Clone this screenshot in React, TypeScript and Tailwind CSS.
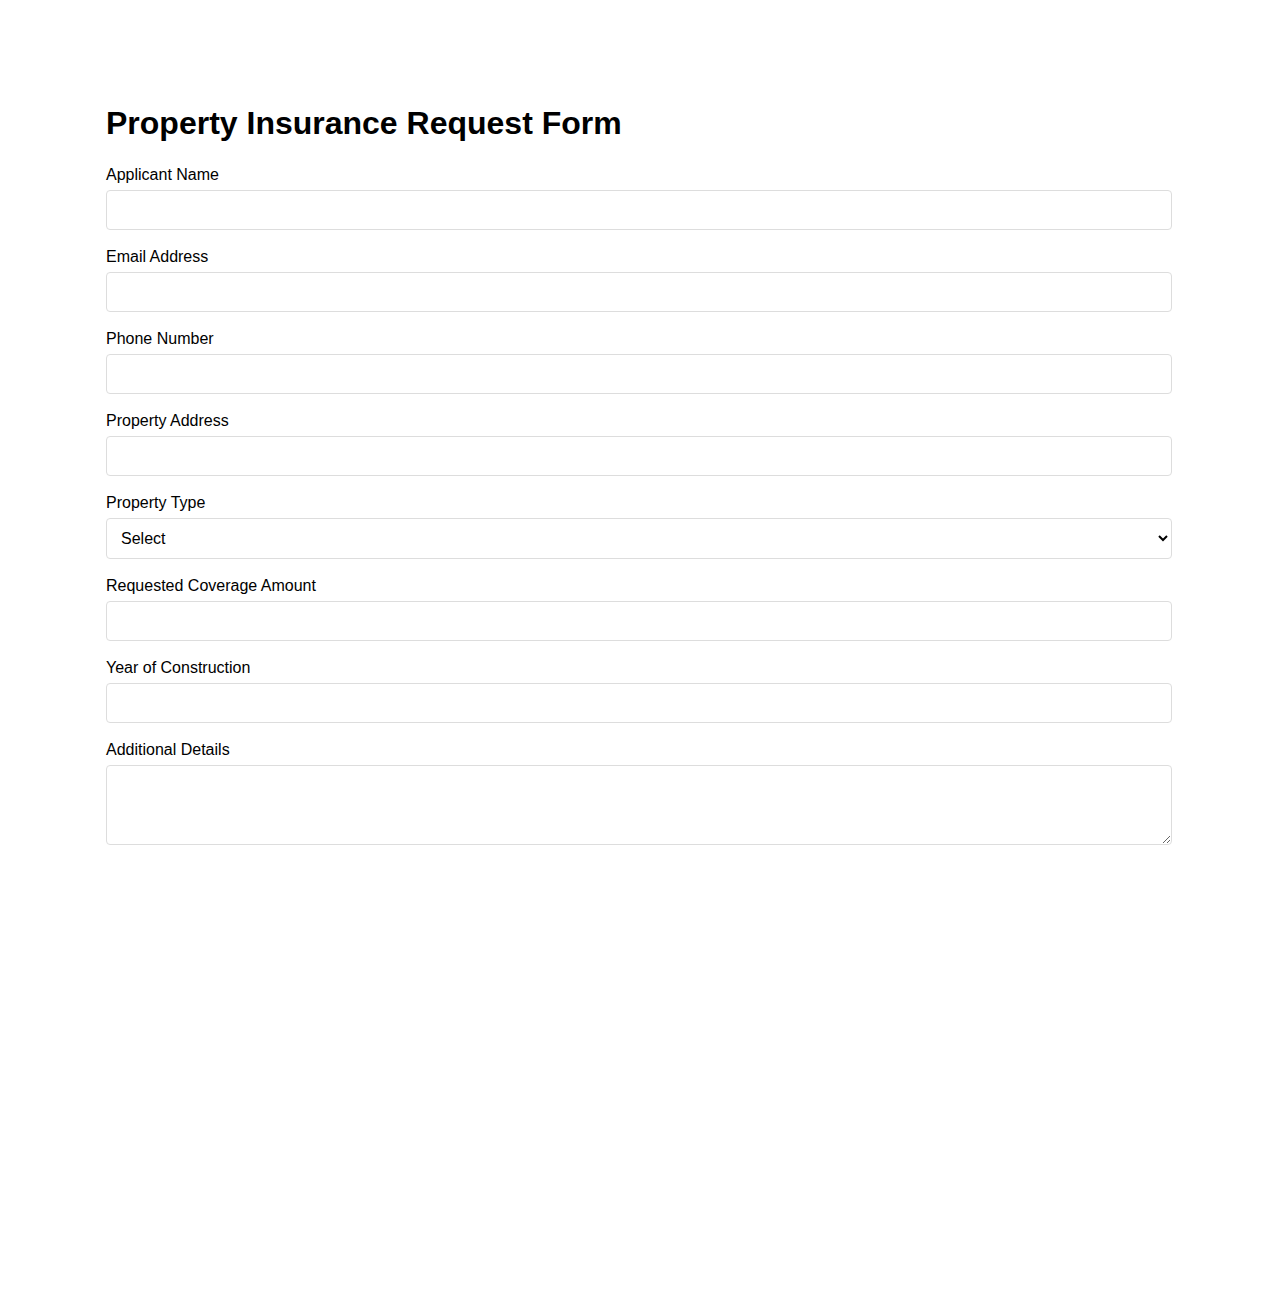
import React from "react";

const textFields = [
  { id: "applicantName", label: "Applicant Name", type: "text" },
  { id: "email", label: "Email Address", type: "email" },
  { id: "phone", label: "Phone Number", type: "tel" },
  { id: "propertyAddress", label: "Property Address", type: "text" },
];

const laterFields = [
  { id: "coverageAmount", label: "Requested Coverage Amount", type: "number" },
  { id: "yearBuilt", label: "Year of Construction", type: "number" },
];

const labelClass = "block text-base leading-[18px] mb-[6px] text-black";
const inputClass =
  "block w-full h-10 px-[10px] border border-[#dddddd] rounded-[4px] bg-white text-base";

function Field({ id, label, type }: { id: string; label: string; type: string }) {
  return (
    <div className="mb-[18px]">
      <label htmlFor={id} className={labelClass}>
        {label}
      </label>
      <input id={id} name={id} type={type} className={inputClass} />
    </div>
  );
}

export default function App() {
  return (
    <div className="min-h-[1300px] bg-white font-['Liberation_Sans',Arial,sans-serif] text-black">
      <div className="mx-auto w-[1066px] pt-[105px]">
        <h1 className="text-[32px] font-bold leading-[37px] mb-6">
          Property Insurance Request Form
        </h1>
        <form>
          {textFields.map((f) => (
            <Field key={f.id} {...f} />
          ))}
          <div className="mb-[18px]">
            <label htmlFor="propertyType" className={labelClass}>
              Property Type
            </label>
            <select
              id="propertyType"
              name="propertyType"
              defaultValue=""
              className="block w-full h-[41px] pl-[10px] pr-2 border border-[#dddddd] rounded-[4px] bg-white text-base"
            >
              <option value="">Select</option>
              <option value="house">House</option>
              <option value="apartment">Apartment</option>
              <option value="commercial">Commercial</option>
            </select>
          </div>
          {laterFields.map((f) => (
            <Field key={f.id} {...f} />
          ))}
          <div>
            <label htmlFor="details" className={labelClass}>
              Additional Details
            </label>
            <textarea
              id="details"
              name="details"
              className="block w-full h-20 px-[10px] py-2 border border-[#dddddd] rounded-[4px] bg-white text-base"
            />
          </div>
        </form>
      </div>
    </div>
  );
}
